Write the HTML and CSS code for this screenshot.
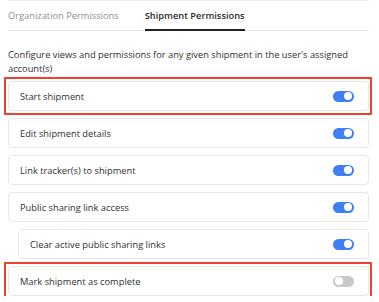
FILE: index.html
```html
<!DOCTYPE html>
<html lang="en">
<head>
    <meta charset="UTF-8">
    <meta name="viewport" content="width=device-width, initial-scale=1.0">
    <title>Shipment Permissions</title>
    <link rel="stylesheet" href="styles.css">
</head>
<body>
    <div class="container">
        <!-- TABS -->
        <div class="tabs">
            <div class="tab">Organization Permissions</div>
            <div class="tab active">Shipment Permissions</div>
        </div>

        <p class="intro">Configure views and permissions for any given shipment in the user's assigned account(s)</p>

        <!-- PERMISSION LIST -->
        <div class="perm-list">
            <div class="perm highlight">
                <span>Start shipment</span>
                <span class="switch on"></span>
            </div>
            <div class="perm">
                <span>Edit shipment details</span>
                <span class="switch on"></span>
            </div>
            <div class="perm">
                <span>Link tracker(s) to shipment</span>
                <span class="switch on"></span>
            </div>
            <div class="perm">
                <span>Public sharing link access</span>
                <span class="switch on"></span>
            </div>
            <div class="perm sub">
                <span>Clear active public sharing links</span>
                <span class="switch on"></span>
            </div>
            <div class="perm highlight">
                <span>Mark shipment as complete</span>
                <span class="switch"></span>
            </div>
        </div>
    </div>
</body>
</html>
```

FILE: styles.css
```css
body {
    font-family: "Open Sans", "Noto Sans", Arial, sans-serif;
    background-color: #ffffff;
    color: #2f2f2f;
    margin: 0;
}
.container {
    padding: 0 10px 0 8px;
}
.tabs {
    display: flex;
    gap: 26px;
    border-top: 1px solid #ececec;
    border-bottom: 1px solid #e6e6e6;
}
.tab {
    font-size: 9.3px;
    line-height: 13px;
    color: #8f8f8f;
    padding: 8px 0 7px;
    border-bottom: 2px solid transparent;
    margin-bottom: -1px;
}
.tab.active {
    color: #2b2b2b;
    font-weight: 600;
    border-bottom-color: #222222;
}
.intro {
    font-size: 9.3px;
    line-height: 14px;
    margin: 17px 0 5px;
}
.perm-list {
    display: flex;
    flex-direction: column;
    gap: 7px;
}
.perm {
    position: relative;
    display: flex;
    align-items: center;
    justify-content: space-between;
    height: 28px;
    padding: 0 14px 0 11px;
    border: 1px solid #e7e7e7;
    border-radius: 4px;
    background-color: white;
    font-size: 9.3px;
}
.perm.sub {
    margin-left: 10px;
}
/* red annotation frame */
.perm.highlight::before {
    content: "";
    position: absolute;
    top: -5px;
    bottom: -5px;
    left: -5px;
    right: -4px;
    border: 2px solid #f0402f;
}
.switch {
    position: relative;
    width: 21px;
    height: 11px;
    border-radius: 6px;
    background-color: #c9c9c9;
}
.switch::after {
    content: "";
    position: absolute;
    top: 1.5px;
    left: 2px;
    width: 8px;
    height: 8px;
    border-radius: 50%;
    background-color: white;
}
.switch.on {
    background-color: #3f7ef3;
}
.switch.on::after {
    left: 11px;
}
```
